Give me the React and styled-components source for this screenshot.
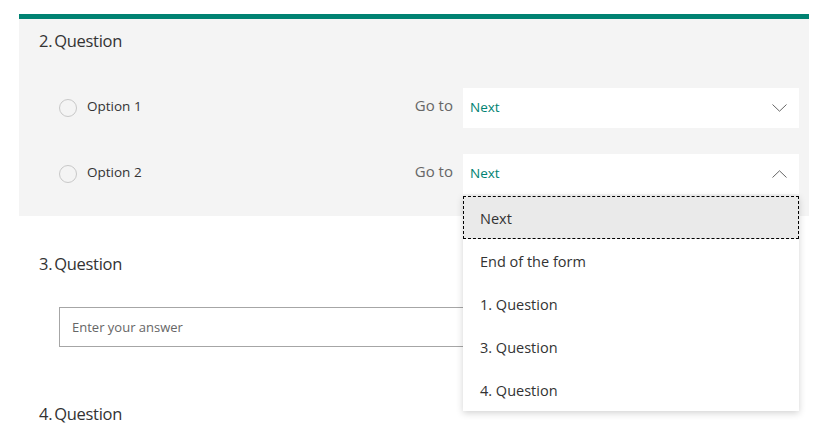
import React from "react"
import styled, { createGlobalStyle } from "styled-components"

const GlobalStyle = createGlobalStyle`
  html, body {
    margin: 0;
    padding: 0;
    background: #ffffff;
    font-family: "Segoe UI", "Open Sans", "Noto Sans", sans-serif;
    color: #333333;
  }
`

const Page = styled.div`
  width: 790px;
  padding: 14px 0 0 19px;
`

const Section = styled.section`
  position: relative;
  background: ${props => props.active ? "#f4f4f4" : "transparent"};
  border-top: ${props => props.active ? "5px solid #008272" : "none"};
  padding: ${props => props.active ? "10px 10px 22px 20px" : "0 10px 0 20px"};
  margin-top: ${props => props.gap || 0}px;
`

const Title = styled.div`
  font-size: 16.5px;
  line-height: 24px;
  font-weight: 400;
  color: #333333;
  letter-spacing: -0.3px;

  span {
    margin-right: 2px;
  }
`

const Choices = styled.div`
  display: flex;
  flex-direction: column;
  gap: 26px;
  margin-top: 35px;
`

const ChoiceRow = styled.div`
  display: flex;
  align-items: center;
  height: 40px;
  padding-left: 20px;
`

const Radio = styled.span`
  width: 16px;
  height: 16px;
  border: 1px solid #c8c8c8;
  border-radius: 50%;
  background: #f4f4f4;
  flex-shrink: 0;
`

const ChoiceText = styled.span`
  flex: 1;
  margin-left: 10px;
  font-size: 13.5px;
  color: #333333;
  position: relative;
  top: -2px;
`

const GoTo = styled.span`
  font-size: 15px;
  color: #666666;
  margin-right: 10px;
  position: relative;
  top: -3px;
`

const SelectWrap = styled.div`
  position: relative;
  width: 336px;
`

const SelectBox = styled.div`
  display: flex;
  align-items: center;
  justify-content: space-between;
  height: 40px;
  padding: 0 12px 0 7px;
  background: #ffffff;
  box-sizing: border-box;
  font-size: 13.5px;
  color: #008272;

  span {
    position: relative;
    top: -1px;
  }
`

const Menu = styled.ul`
  position: absolute;
  top: 42px;
  left: 0;
  right: 0;
  margin: 0;
  padding: 0;
  list-style: none;
  background: #ffffff;
  box-shadow: 0 2px 7px rgba(0, 0, 0, 0.18);
  z-index: 5;
`

const MenuItem = styled.li`
  height: 43px;
  display: flex;
  align-items: center;
  padding: 2px 0 0 17px;
  font-size: 14.5px;
  color: #333333;
  box-sizing: border-box;
  background: ${props => props.focused ? "#eaeaea" : "#ffffff"};
  outline: ${props => props.focused ? "1px dashed #000000" : "none"};
  outline-offset: -1px;
`

const Answer = styled.div`
  margin: 31px 0 0 20px;
  height: 40px;
  border: 1px solid #a6a6a6;
  box-sizing: border-box;
  display: flex;
  align-items: center;
  padding-left: 12px;
  font-size: 13px;
  color: #666666;
`

const Chevron = ({ up }) => (
  <svg width="15" height="8" viewBox="0 0 15 8">
    <path
      d={up ? "M0.5 7.5 L7.5 0.8 L14.5 7.5" : "M0.5 0.5 L7.5 7.2 L14.5 0.5"}
      fill="none"
      stroke="#666666"
      strokeWidth="1"
    />
  </svg>
)

const targets = ["Next", "End of the form", "1. Question", "3. Question", "4. Question"]

const Choice = ({ label, open }) => (
  <ChoiceRow>
    <Radio />
    <ChoiceText>{label}</ChoiceText>
    <GoTo>Go to</GoTo>
    <SelectWrap>
      <SelectBox>
        <span>Next</span>
        <Chevron up={open} />
      </SelectBox>
      {open && (
        <Menu>
          {targets.map((t, i) => (
            <MenuItem key={t} focused={i === 0}>{t}</MenuItem>
          ))}
        </Menu>
      )}
    </SelectWrap>
  </ChoiceRow>
)

const App = () => (
  <>
    <GlobalStyle />
    <Page>
      <Section active>
        <Title><span>2.</span>Question</Title>
        <Choices>
          <Choice label="Option 1" />
          <Choice label="Option 2" open />
        </Choices>
      </Section>
      <Section gap={36}>
        <Title><span>3.</span>Question</Title>
        <Answer>Enter your answer</Answer>
      </Section>
      <Section gap={55}>
        <Title><span>4.</span>Question</Title>
      </Section>
    </Page>
  </>
)

export default App
